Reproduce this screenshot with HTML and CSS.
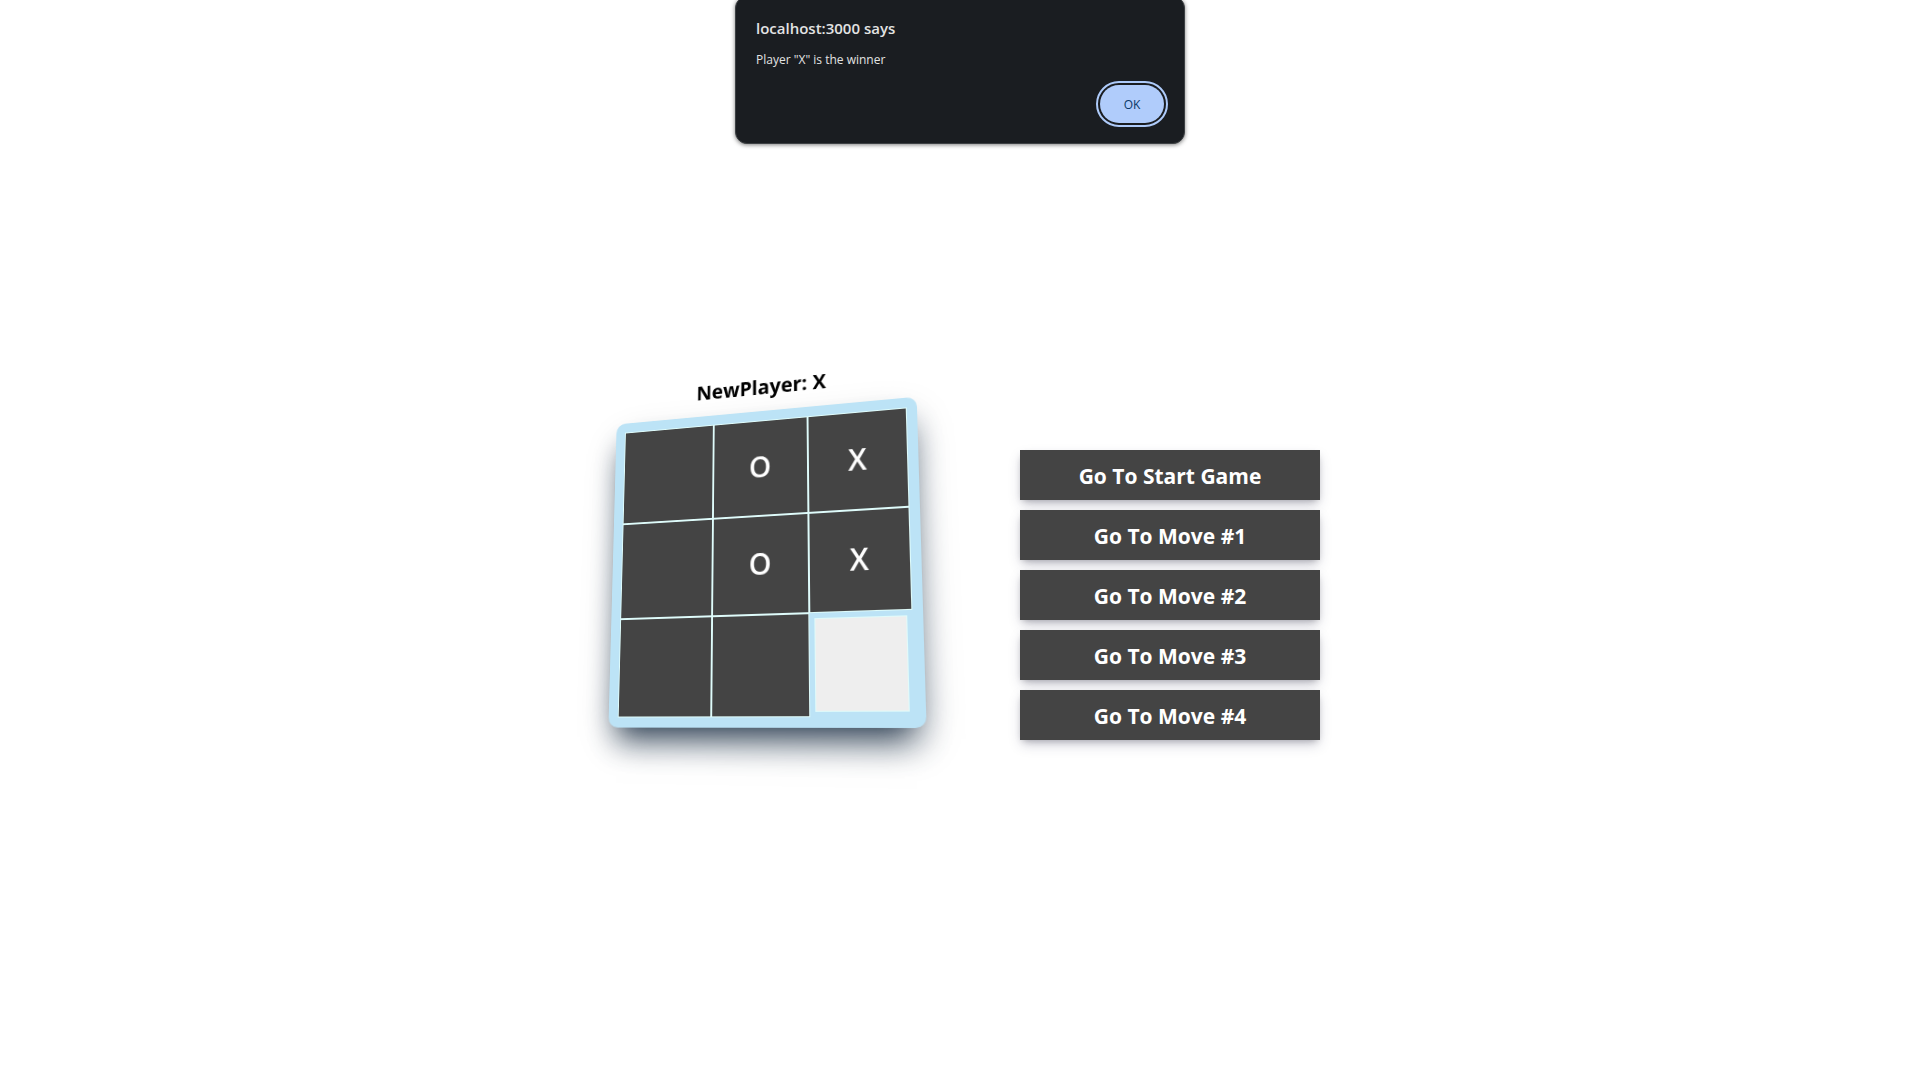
FILE: index.html
```html
<!DOCTYPE html>
<html lang="en">
<head>
<meta charset="utf-8">
<title>Tic Tac Toe</title>
<link rel="stylesheet" href="styles.css">
</head>
<body>
<main class="game">
  <section class="stage">
    <h2 class="status">NewPlayer: X</h2>
    <div class="board">
      <button class="square" aria-label="Empty square 1"></button>
      <button class="square">O</button>
      <button class="square">X</button>
      <button class="square" aria-label="Empty square 4"></button>
      <button class="square">O</button>
      <button class="square">X</button>
      <button class="square" aria-label="Empty square 7"></button>
      <button class="square" aria-label="Empty square 8"></button>
      <button class="square square-active" aria-label="Empty square 9"></button>
    </div>
  </section>
  <ul class="moves">
    <li><button class="move">Go To Start Game</button></li>
    <li><button class="move">Go To Move #1</button></li>
    <li><button class="move">Go To Move #2</button></li>
    <li><button class="move">Go To Move #3</button></li>
    <li><button class="move">Go To Move #4</button></li>
  </ul>
</main>
<div class="alert" role="alertdialog" aria-labelledby="alert-title" aria-describedby="alert-text">
  <h1 class="alert-title" id="alert-title">localhost:3000 says</h1>
  <p class="alert-text" id="alert-text">Player "X" is the winner</p>
  <button class="alert-ok">OK</button>
</div>
</body>
</html>
```
FILE: styles.css
```css
* {
  box-sizing: border-box;
  margin: 0;
  padding: 0;
}

body {
  background: #fff;
  color: #000;
  font-family: "Open Sans", "Noto Sans", sans-serif;
}

button {
  border: 0;
  font-family: inherit;
}

.game {
  display: flex;
  justify-content: center;
  align-items: center;
  gap: 100px;
  min-height: 100vh;
}

.stage {
  width: 320px;
  transform-origin: 50% calc(100% - 170px);
  transform: perspective(950px) rotateX(10deg) rotateY(-16deg);
}

.status {
  height: 50px;
  font-size: 21px;
  line-height: 48px;
  text-align: center;
}

.board {
  display: grid;
  grid-template-columns: repeat(3, 1fr);
  grid-auto-rows: 100px;
  border: 10px solid #bce3f6;
  border-radius: 10px;
  background: #bce3f6;
  box-shadow: rgb(38, 57, 77) 0 20px 30px -10px, rgba(38, 57, 77, 0.12) 0 16px 40px;
}

.square {
  padding-bottom: 4px;
  border: 1px solid #dffcfb;
  background: #444;
  color: #fff;
  font-size: 30px;
  font-weight: 600;
}

.square-active {
  background: #eee;
  transform: scale(0.9);
}

.moves {
  display: grid;
  gap: 10px;
  width: 300px;
  margin-top: 110px;
  list-style: none;
}

.move {
  display: block;
  width: 100%;
  height: 50px;
  padding-top: 2px;
  background: #444;
  color: #fff;
  font-size: 21px;
  font-weight: 700;
  box-shadow: rgba(50, 50, 93, 0.25) 0 6px 12px -2px, rgba(0, 0, 0, 0.3) 0 3px 7px -3px;
}

.alert {
  position: absolute;
  top: -4px;
  left: 50%;
  display: flex;
  flex-direction: column;
  width: 450px;
  padding: 20px;
  border: 1px solid #3c4043;
  border-radius: 12px;
  background: #1a1d21;
  color: #e3e3e3;
  box-shadow: 0 1px 4px rgba(0, 0, 0, 0.5);
  transform: translateX(-50%);
}

.alert-title {
  font-size: 15px;
  font-weight: 600;
  line-height: 22px;
}

.alert-text {
  margin-top: 11px;
  font-size: 12px;
  line-height: 20px;
}

.alert-ok {
  align-self: flex-end;
  width: 64px;
  height: 38px;
  margin-top: 15px;
  border-radius: 20px;
  outline: 2px solid #aecbfa;
  outline-offset: 2px;
  background: #b0ccfb;
  color: #0b3a66;
  font-size: 12px;
}
```
